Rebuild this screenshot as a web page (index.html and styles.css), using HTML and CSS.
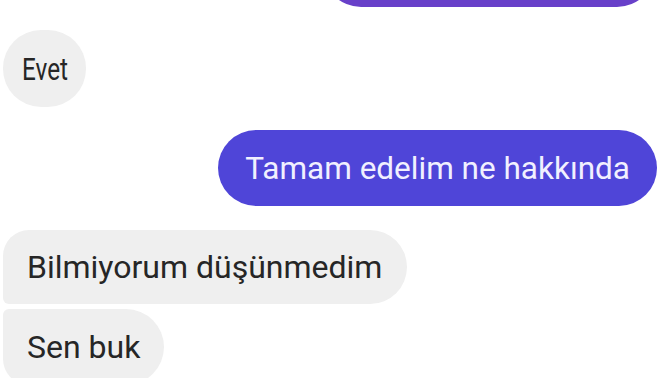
FILE: index.html
```html
<!DOCTYPE html>
<html lang="tr">
<head>
    <meta charset="UTF-8">
    <title>Sohbet</title>
    <link rel="stylesheet" href="styles.css">
</head>
<body>
    <div class="chat">
        <div class="row sent first">
            <div class="bubble out top"></div>
        </div>
        <div class="row received">
            <div class="bubble in single"><span class="narrow">Evet</span></div>
        </div>
        <div class="row sent">
            <div class="bubble out">Tamam edelim ne hakkında</div>
        </div>
        <div class="group">
            <div class="row received">
                <div class="bubble in group-first">Bilmiyorum düşünmedim</div>
            </div>
            <div class="row received">
                <div class="bubble in group-last">Sen buk</div>
            </div>
        </div>
    </div>
</body>
</html>
```

FILE: styles.css
```css
body {
    margin: 0;
    padding: 0;
    background: #fff;
    font-family: Roboto, "Noto Sans", sans-serif;
    overflow: hidden;
    height: 378px;
}

.chat {
    display: flex;
    flex-direction: column;
    gap: 23px;
    padding: 0 15px 0 3px;
}

.row {
    display: flex;
}

.row.sent {
    justify-content: flex-end;
}

.row.first {
    margin-top: -69px;
}

.group {
    display: flex;
    flex-direction: column;
    gap: 5px;
    margin-top: 1px;
}

.bubble {
    height: 76px;
    display: flex;
    align-items: center;
    padding: 0 25px;
    border-radius: 38px;
    font-size: 32px;
    white-space: nowrap;
    box-sizing: border-box;
}

.bubble.out {
    background: #4f45d8;
    color: #f1f0ff;
    padding: 0 27px;
    font-size: 31.5px;
}

.bubble.out.top {
    background: #6840c9;
    width: 332px;
    margin-right: 2px;
}

.bubble.in {
    background: #efefef;
    color: #262626;
}

.bubble.single {
    width: 83px;
    height: 77px;
    padding: 0 19px;
}

.narrow {
    display: inline-block;
    transform: scaleX(0.76);
    transform-origin: left center;
}

.bubble.group-first {
    height: 74px;
    border-radius: 26px 37px 37px 6px;
    padding: 0 25px 0 24px;
}

.bubble.group-last {
    border-radius: 6px 38px 38px 26px;
    padding: 0 24px;
}
```
